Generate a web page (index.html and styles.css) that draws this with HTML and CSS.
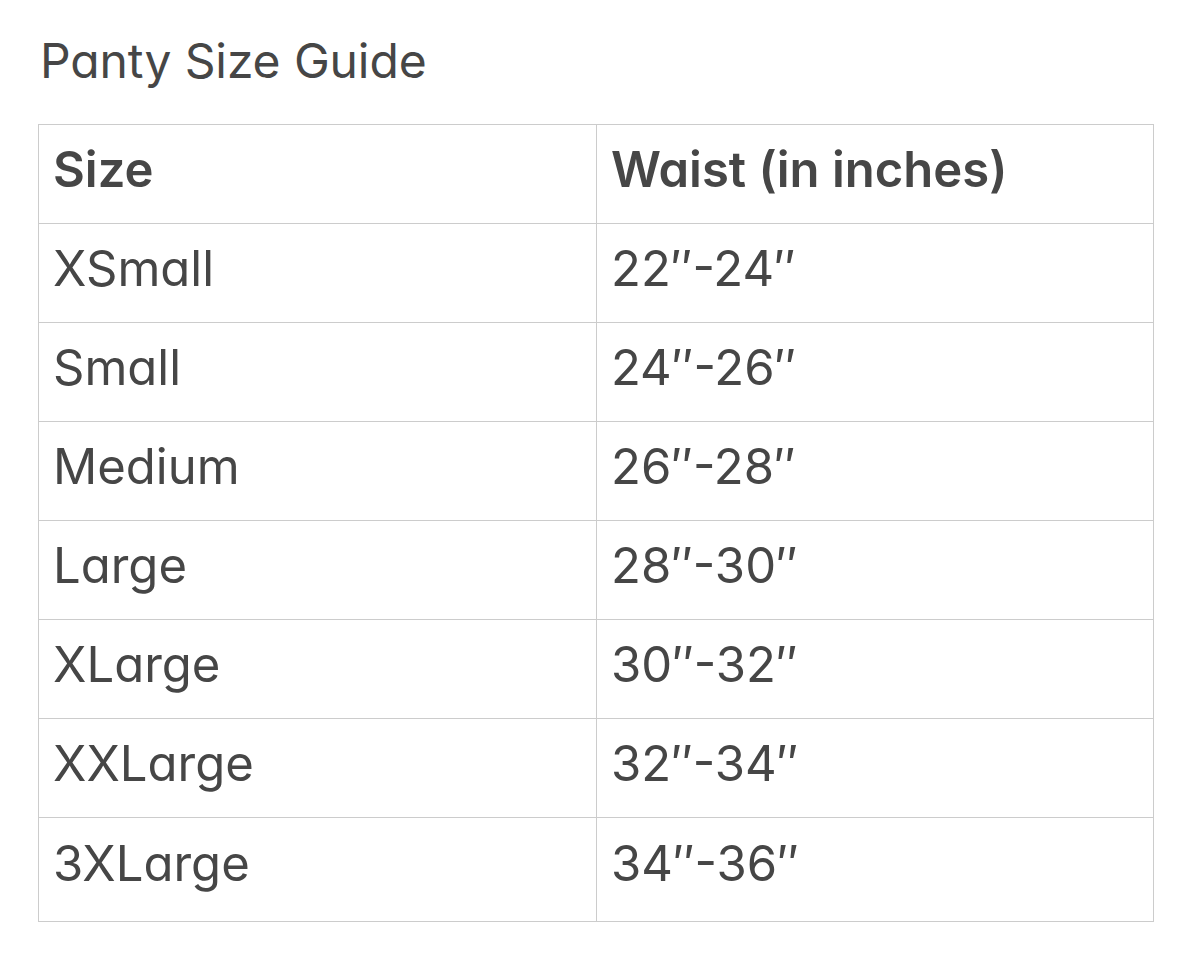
FILE: index.html
```html
<!DOCTYPE html>
<html>
<head>
<meta charset="utf-8">
<link rel="stylesheet" href="styles.css">
</head>
<body>
<div class="page">
  <h1 class="title">Panty Size Guide</h1>
  <table class="size-table">
    <colgroup><col class="col-a"><col class="col-b"></colgroup>
    <thead>
      <tr><th>Size</th><th>Waist (in inches)</th></tr>
    </thead>
    <tbody>
      <tr><td>XSmall</td><td>22″-24″</td></tr>
      <tr><td>Small</td><td>24″-26″</td></tr>
      <tr><td>Medium</td><td>26″-28″</td></tr>
      <tr><td>Large</td><td>28″-30″</td></tr>
      <tr><td>XLarge</td><td>30″-32″</td></tr>
      <tr><td>XXLarge</td><td>32″-34″</td></tr>
      <tr class="last"><td>3XLarge</td><td>34″-36″</td></tr>
    </tbody>
  </table>
</div>
</body>
</html>
```
FILE: styles.css
```css
html, body {
  margin: 0;
  padding: 0;
  background: #fff;
}
.page {
  padding: 32px 0 0 38px;
  font-family: Inter, "Noto Sans", sans-serif;
  font-feature-settings: "cv11";
  color: #464646;
}
.title {
  margin: 0 0 34px 2px;
  font-size: 48px;
  font-weight: 400;
  line-height: 58px;
  letter-spacing: -0.1px;
}
.size-table {
  width: 1116px;
  border-collapse: collapse;
  table-layout: fixed;
}
.col-a { width: 558px; }
.size-table th,
.size-table td {
  border: 1px solid #cccccc;
  height: 99px;
  padding: 0 14px 8px;
  text-align: left;
  vertical-align: middle;
  font-size: 49px;
  line-height: 58px;
  box-sizing: border-box;
}
.size-table th {
  font-weight: 600;
}
.size-table td {
  font-weight: 400;
}
.size-table .last td {
  height: 104px;
  padding-bottom: 12px;
}
```
